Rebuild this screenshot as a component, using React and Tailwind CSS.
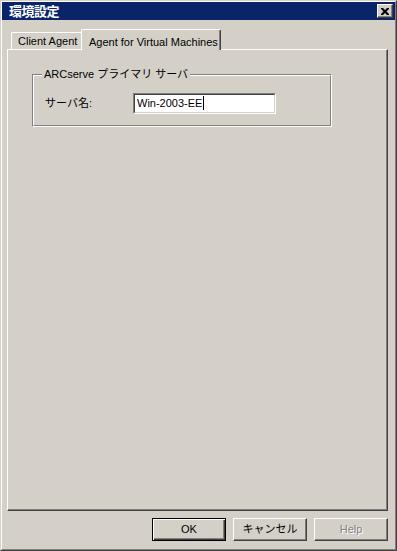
import React from "react"

const ui = { fontFamily: '"Liberation Sans", "Noto Sans CJK JP", sans-serif' }

const Button = ({ children, isDefault, disabled }) => {
  if (isDefault) {
    return (
      <div className="w-[74px] h-[23px] border border-black">
        <div className="w-full h-full flex items-center justify-center text-[11px] text-black shadow-[inset_1px_1px_#ffffff,inset_-1px_-1px_#404040,inset_-2px_-2px_#808080]">
          {children}
        </div>
      </div>
    )
  }
  return (
    <div className="w-[74px] h-[23px] flex items-center justify-center text-[11px] border-l border-t border-white border-r border-b border-r-[#404040] border-b-[#404040] shadow-[inset_-1px_-1px_#808080]">
      {disabled ? (
        <span className="text-[#808080] [text-shadow:1px_1px_#ffffff]">{children}</span>
      ) : (
        <span className="text-black">{children}</span>
      )}
    </div>
  )
}

export default function App() {
  return (
    <div
      className="w-[397px] h-[551px] bg-[#d4d0c8] border-l border-t border-[#d4d0c8] border-r border-b border-r-[#404040] border-b-[#404040]"
      style={ui}
    >
      <div className="w-full h-full flex flex-col border-l border-t border-white border-r border-b border-r-[#808080] border-b-[#808080]">
        {/* title bar */}
        <div className="h-[18px] mx-[0px] bg-[#0a246a] flex items-center justify-between pl-[7px] pr-[2px]">
          <span className="text-white font-bold text-[13px] leading-none tracking-[-0.5px]">環境設定</span>
          <div className="w-[16px] h-[14px] bg-[#d4d0c8] flex items-center justify-center border-l border-t border-white border-r border-b border-r-[#404040] border-b-[#404040] shadow-[inset_-1px_-1px_#808080]">
            <svg width="8" height="7" viewBox="0 0 8 7">
              <path d="M0 0h2l2 2 2-2h2v1l-2.5 2.5L8 6v1H6L4 5 2 7H0V6l2.5-2.5L0 1z" fill="#000" />
            </svg>
          </div>
        </div>

        {/* tabs */}
        <div className="flex items-end h-[21px] mt-[9px] pl-[9px] text-[11px] text-black">
          <div className="w-[72px] h-[18px] flex items-center pl-[6px] border-l border-t border-white rounded-tl-[2px] pb-[1px]">
            Client Agent
          </div>
          <div className="relative z-10 -ml-[2px] w-[140px] h-[21px] bg-[#d4d0c8] flex items-start pt-[4px] pl-[7px] border-l border-t border-white border-r border-r-[#404040] rounded-t-[2px] shadow-[inset_-1px_0_#808080]">
            Agent for Virtual Machines
          </div>
        </div>

        {/* panel */}
        <div className="-mt-[1px] ml-[5px] w-[381px] h-[462px] border-l border-t border-white border-r border-b border-r-[#404040] border-b-[#404040] shadow-[inset_-1px_-1px_#808080]">
          <div className="relative ml-[24px] mt-[24px] w-[300px] h-[53px] border-l border-t border-[#808080] border-r border-b border-r-white border-b-white">
            <div className="w-full h-full border-l border-t border-white border-r border-b border-r-[#808080] border-b-[#808080] flex items-center pl-[11px] pt-[5px]">
              <span className="text-[11px] text-black w-[88px]">サーバ名:</span>
              <div className="w-[143px] h-[21px] bg-white border-l border-t border-[#808080] border-r border-b border-r-white border-b-white">
                <div className="w-full h-full border-l border-t border-[#404040] border-r border-b border-r-[#d4d0c8] border-b-[#d4d0c8] flex items-center pl-[2px]">
                  <span className="text-[11px] text-black leading-none">Win-2003-EE</span>
                  <span className="w-[1px] h-[14px] bg-black ml-[1px]" />
                </div>
              </div>
            </div>
            <span className="absolute left-[9px] -top-[8px] px-[2px] bg-[#d4d0c8] text-[11px] text-black leading-[14px]">
              ARCserve プライマリ サーバ
            </span>
          </div>
        </div>

        {/* buttons */}
        <div className="flex justify-end gap-[7px] mt-[7px] pr-[7px]">
          <Button isDefault>OK</Button>
          <Button>キャンセル</Button>
          <Button disabled>Help</Button>
        </div>
      </div>
    </div>
  )
}
